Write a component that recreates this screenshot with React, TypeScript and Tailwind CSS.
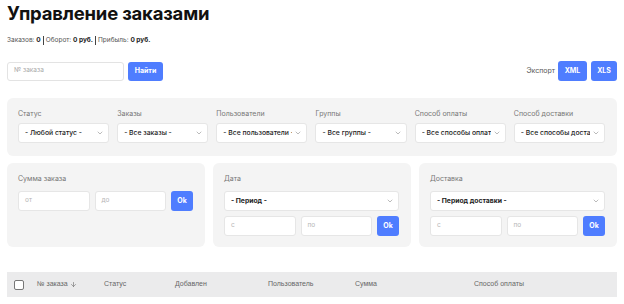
import { ChevronDown, ArrowDown } from 'lucide-react';

function Select({ value, bold = false, className = '' }: { value: string; bold?: boolean; className?: string }) {
  return (
    <div className={`flex h-[20px] items-center justify-between overflow-hidden rounded-[3px] border border-[#e6e6e6] bg-white pl-[6px] pr-[4px] ${className}`}>
      <span className={`overflow-hidden whitespace-nowrap text-[6.8px] text-[#222] ${bold ? 'font-bold' : 'font-medium'}`}>{value}</span>
      <ChevronDown className="ml-[2px] h-[8px] w-[8px] shrink-0 text-[#777]" strokeWidth={1.5} />
    </div>
  );
}

function Field({ placeholder }: { placeholder: string }) {
  return (
    <div className="flex h-[20px] flex-1 items-center rounded-[3px] border border-[#e6e6e6] bg-white px-[6px] text-[6.5px] text-[#b5b5b5]">
      {placeholder}
    </div>
  );
}

function OkButton() {
  return (
    <button className="flex h-[20px] w-[22px] shrink-0 items-center justify-center rounded-[3px] bg-[#4f7dff] text-[7px] font-bold text-white">
      Ok
    </button>
  );
}

const filters = [
  { label: 'Статус', value: '- Любой статус -' },
  { label: 'Заказы', value: '- Все заказы -' },
  { label: 'Пользователи', value: '- Все пользователи -' },
  { label: 'Группы', value: '- Все группы -' },
  { label: 'Способ оплаты', value: '- Все способы оплаты -' },
  { label: 'Способ доставки', value: '- Все способы доставки -' },
];

export default function App() {
  return (
    <div className="h-[304px] w-[624px] overflow-hidden bg-white px-[7px] pt-[1px] text-[#222]" style={{ fontFamily: 'Inter, "Noto Sans", sans-serif' }}>
      {/* Title */}
      <h1 className="text-[18.5px] font-bold leading-[24px] tracking-[-0.2px] text-[#111]">Управление заказами</h1>

      {/* Stats */}
      <div className="mt-[11px] flex items-center text-[6.5px] leading-[9px] text-[#555]">
        <span>Заказов: <b className="text-[#222]">0</b></span>
        <span className="mx-[2px] h-[9px] w-px bg-[#444]" />
        <span>Оборот: <b className="text-[#222]">0 руб.</b></span>
        <span className="mx-[2px] h-[9px] w-px bg-[#444]" />
        <span>Прибыль: <b className="text-[#222]">0 руб.</b></span>
      </div>

      {/* Search + export */}
      <div className="mt-[16px] flex items-center justify-between">
        <div className="flex items-center gap-[4px]">
          <div className="flex h-[19px] w-[117px] items-center rounded-[3px] border border-[#e3e3e3] px-[6px] text-[6.5px] text-[#aaa]">
            № заказа
          </div>
          <button className="h-[19px] w-[35px] rounded-[3px] bg-[#4f7dff] text-[7px] font-bold text-white">Найти</button>
        </div>
        <div className="flex items-center gap-[4px]">
          <span className="mr-[-1px] text-[7px] text-[#555]">Экспорт</span>
          <button className="h-[20px] w-[29px] rounded-[3px] bg-[#4f7dff] text-[7px] font-bold text-white">XML</button>
          <button className="h-[20px] w-[26px] rounded-[3px] bg-[#4f7dff] text-[7px] font-bold text-white">XLS</button>
        </div>
      </div>

      {/* Filters row 1 */}
      <div className="mt-[17px] grid grid-cols-6 gap-[8px] rounded-[6px] bg-[#f4f4f4] pb-[13px] pl-[11px] pr-[12px] pt-[12px]">
        {filters.map((f) => (
          <div key={f.label} className="flex min-w-0 flex-col gap-[5px]">
            <span className="text-[7px] leading-[8px] text-[#777]">{f.label}</span>
            <Select value={f.value} />
          </div>
        ))}
      </div>

      {/* Filters row 2 */}
      <div className="mt-[7px] grid grid-cols-3 gap-[8px]">
        <div className="h-[84px] rounded-[6px] bg-[#f4f4f4] pl-[11px] pr-[12px] pt-[12px]">
          <div className="text-[7px] leading-[8px] text-[#777]">Сумма заказа</div>
          <div className="mt-[8px] flex gap-[5px]">
            <Field placeholder="от" />
            <Field placeholder="до" />
            <OkButton />
          </div>
        </div>
        <div className="h-[84px] rounded-[6px] bg-[#f4f4f4] pl-[11px] pr-[12px] pt-[12px]">
          <div className="text-[7px] leading-[8px] text-[#777]">Дата</div>
          <Select value="- Период -" bold className="mt-[8px]" />
          <div className="mt-[5px] flex gap-[5px]">
            <Field placeholder="с" />
            <Field placeholder="по" />
            <OkButton />
          </div>
        </div>
        <div className="h-[84px] rounded-[6px] bg-[#f4f4f4] pl-[11px] pr-[12px] pt-[12px]">
          <div className="text-[7px] leading-[8px] text-[#777]">Доставка</div>
          <Select value="- Период доставки -" bold className="mt-[8px]" />
          <div className="mt-[5px] flex gap-[5px]">
            <Field placeholder="с" />
            <Field placeholder="по" />
            <OkButton />
          </div>
        </div>
      </div>

      {/* Table header */}
      <div
        className="mt-[25px] flex h-[25px] items-center bg-[#ebebec] text-[7px] text-[#666]"
        style={{ fontFamily: '"Liberation Sans", Arial, sans-serif' }}
      >
        <span className="ml-[7px] h-[10px] w-[10px] rounded-[2px] border border-[#777] bg-white" />
        <span className="ml-[13px] flex w-[67px] items-center">
          № заказа
          <ArrowDown className="ml-[2px] h-[7px] w-[7px]" strokeWidth={2} />
        </span>
        <span className="w-[71px]">Статус</span>
        <span className="w-[93px]">Добавлен</span>
        <span className="w-[87px]">Пользователь</span>
        <span className="w-[119px]">Сумма</span>
        <span>Способ оплаты</span>
      </div>
    </div>
  );
}
